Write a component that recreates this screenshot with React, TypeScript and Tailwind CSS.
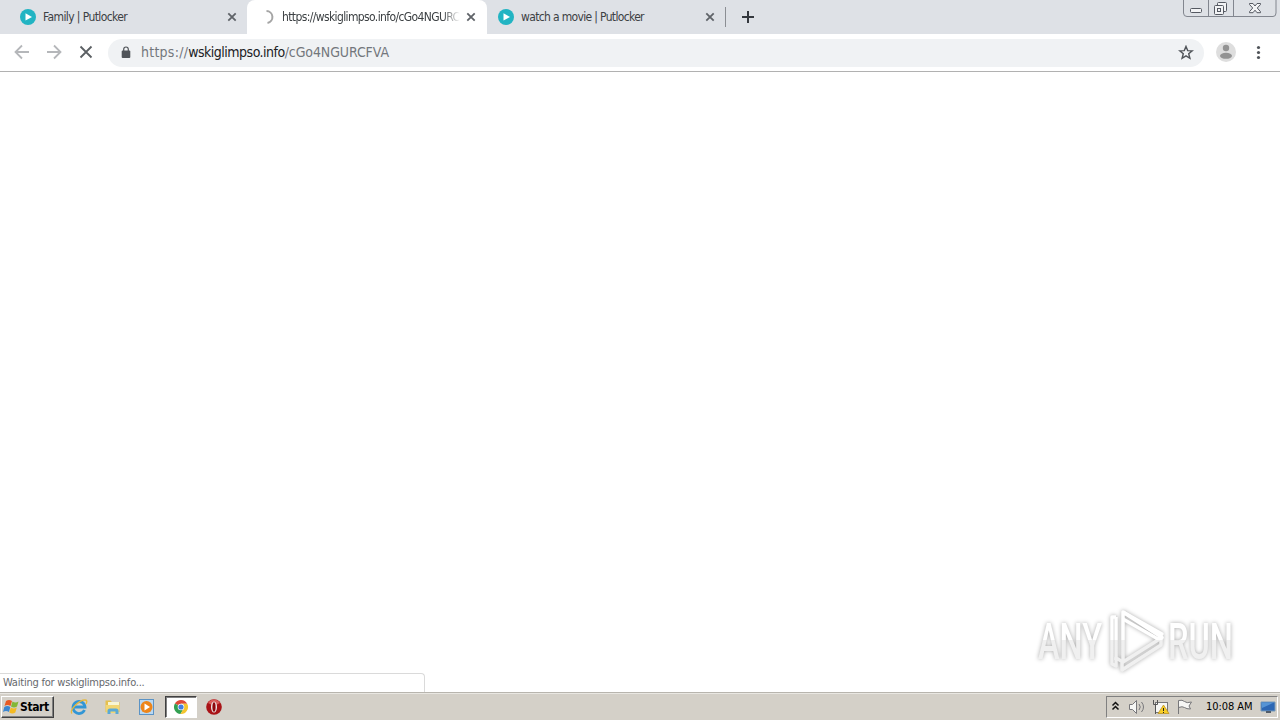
import type { ReactNode } from "react"

function PutlockerIcon() {
  return (
    <svg width="16" height="16" viewBox="0 0 16 16" className="shrink-0">
      <circle cx="8" cy="8" r="8" fill="#22b4c3" />
      <path d="M5.5 4.2v7.4L12 8z" fill="#fff" />
    </svg>
  )
}

function Spinner() {
  return (
    <svg width="16" height="16" viewBox="0 0 16 16" className="shrink-0">
      <path d="M7.5 2a6 6 0 0 1 1 11.9" fill="none" stroke="#a5a5a5" strokeWidth="2" />
    </svg>
  )
}

function CloseIcon() {
  return (
    <svg width="10" height="10" viewBox="0 0 10 10" className="shrink-0">
      <path d="M1.3 1.3l7.4 7.4M8.7 1.3L1.3 8.7" stroke="#5f6368" strokeWidth="1.8" />
    </svg>
  )
}

function Tab({ icon, children }: { icon: ReactNode; children: ReactNode }) {
  return (
    <>
      {icon}
      <div className="ml-[7px] w-[178px] shrink-0 overflow-hidden whitespace-nowrap">{children}</div>
      <div className="ml-[6px]">
        <CloseIcon />
      </div>
    </>
  )
}

function WindowButtons() {
  return (
    <svg width="94" height="18" viewBox="0 0 94 18" className="shrink-0">
      <path d="M.5 0v13q0 3.5 3.5 3.5h86q3 0 3-3.5V0M25.500 0v16.500M50.500 0v16.500" fill="none" stroke="#82868f" />
      <g fill="#f2f3f5" stroke="#555962">
        <rect x="7.500" y="8.500" width="11" height="4" rx="1" />
        <rect x="34.500" y="2.500" width="9" height="9" rx="1" />
        <rect x="31.500" y="5.500" width="9" height="9" rx="1" />
        <rect x="34.500" y="8.500" width="3" height="3" />
        <path d="M66.500 3.500h3.500l2 2.500 2-2.500h3.500v1L74.300 8l3.200 3.700v1H74l-2-2.500-2 2.500h-3.500v-1L69.700 8l-3.200-3.500z" />
      </g>
    </svg>
  )
}

function TabStrip() {
  return (
    <div className="flex h-[34px] shrink-0 bg-[#dee1e6] text-[12px] text-[#3c4043]">
      <div className="flex w-[247px] items-center rounded-br-lg pl-5">
        <Tab icon={<PutlockerIcon />}>
          <span className="tracking-[-0.6px]">Family | Putlocker</span>
        </Tab>
      </div>
      <div className="flex w-[240px] items-center rounded-t-lg bg-white pl-3">
        <Tab icon={<Spinner />}>
          <div className="mask-r-from-90% mask-r-to-100% tracking-[-0.62px]">https://wskiglimpso.info/cGo4NGURCFVA</div>
        </Tab>
      </div>
      <div className="flex w-[239px] items-center pl-[11px]">
        <Tab icon={<PutlockerIcon />}>
          <span className="tracking-[-0.66px]">watch a movie | Putlocker</span>
        </Tab>
        <div className="ml-[10px] h-5 w-px bg-[#8b8e93]" />
      </div>
      <div className="flex grow items-center pl-[16px]">
        <svg width="12" height="12" viewBox="0 0 12 12">
          <path d="M6 0v12M0 6h12" stroke="#34383e" strokeWidth="2" />
        </svg>
      </div>
      <div className="mr-[3px]">
        <WindowButtons />
      </div>
    </div>
  )
}

function Toolbar() {
  return (
    <div className="flex h-[38px] shrink-0 items-center border-b border-[#b1b1b1] bg-white">
      <svg width="108" height="37" viewBox="0 0 108 37" fill="none" strokeWidth="1.800">
        <path d="M29 18H16M22 11.500L15.500 18l6.500 6.500" stroke="#b5b7ba" />
        <path d="M47 18h13M54 11.500l6.500 6.500-6.500 6.500" stroke="#b5b7ba" />
        <path d="M80.500 12.500l11 11M91.500 12.500l-11 11" stroke="#5b5f63" />
      </svg>
      <div className="flex h-[28px] w-[1096px] items-center rounded-full bg-[#f0f2f4] pr-[10px] pl-[13px]">
        <svg width="10" height="14" viewBox="0 0 10 14">
          <rect x=".7" y="4.500" width="8.600" height="7.500" rx="1" fill="#505459" />
          <path d="M2.700 5V3.300a2.300 2.300 0 0 1 4.600 0V5" fill="none" stroke="#505459" strokeWidth="1.200" />
        </svg>
        <div className="ml-[10px] grow text-[14px] whitespace-nowrap text-[#73777c]">
          <span className="tracking-[0.25px]">https://</span>
          <span className="tracking-[-0.5px] text-[#202124]">wskiglimpso.info</span>
          <span className="tracking-[-0.1px]">/cGo4NGURCFVA</span>
        </div>
        <svg width="16" height="16" viewBox="0 0 16 16">
          <path d="M8 1.400l1.700 4.200 4.500.3-3.500 2.900 1.200 4.500L8 10.800l-3.900 2.500 1.200-4.500L1.800 5.900l4.500-.3z" fill="none" stroke="#505459" strokeWidth="1.400" />
        </svg>
      </div>
      <svg width="76" height="37" viewBox="0 0 76 37">
        <circle cx="22" cy="18" r="10" fill="#dedede" />
        <circle cx="22" cy="14" r="3.200" fill="#939393" />
        <ellipse cx="22" cy="21.800" rx="6" ry="3" fill="#939393" />
        <g fill="#505459">
          <circle cx="54.500" cy="13.500" r="1.600" />
          <circle cx="54.500" cy="18.500" r="1.600" />
          <circle cx="54.500" cy="23.500" r="1.600" />
        </g>
      </svg>
    </div>
  )
}

function AnyRunLogo() {
  return (
    <svg width="210" height="80" viewBox="0 0 210 80" className="overflow-visible drop-shadow-[0_0_2px_#aaa]">
      <defs>
        <linearGradient id="sheen" x1="0" y1="0" x2="0" y2="80" gradientUnits="userSpaceOnUse">
          <stop offset=".5" stopColor="#fff" />
          <stop offset=".5" stopColor="#f0f0f0" />
        </linearGradient>
      </defs>
      <g fill="url(#sheen)" fontFamily="Roboto, sans-serif" fontSize="50" fontWeight="500">
        <text x="8" y="59" textLength="64" lengthAdjust="spacingAndGlyphs">ANY</text>
        <text x="138" y="59" textLength="65" lengthAdjust="spacingAndGlyphs">RUN</text>
      </g>
      <g fill="none" stroke="url(#sheen)" strokeWidth="3.500" strokeLinejoin="round">
        <path d="M93 12v50l39-24.500z" />
        <path d="M93 12l39 22-4 5-35-20" />
        <path d="M86 17h-4v47l4 2v-8l7 4M92 62v8l39-25v-8" />
        <path d="M86 17v43" />
      </g>
    </svg>
  )
}

function WindowsFlag() {
  return (
    <svg width="17" height="16" viewBox="0 0 17 16" className="shrink-0">
      <path d="M3 2q3-2 6 0L7.500 7q-3-2-6 0z" fill="#e85a23" />
      <path d="M9.500 2.500q3 2 6 0L14 7.500q-3 2-6 0z" fill="#83b735" />
      <path d="M1.300 8q3-2 6 0L6 13q-3-2-6 0z" fill="#3b86d0" />
      <path d="M7.800 8.500q3 2 6 0l-1.500 5q-3 2-6 0z" fill="#f4ba22" />
    </svg>
  )
}

function QuickLaunch() {
  return (
    <>
      <svg width="18" height="18" viewBox="0 0 18 18" className="ml-[16px]">
        <path d="M14.500 12A6 6 0 1 1 15 9H4" fill="none" stroke="#3296d5" strokeWidth="2.800" />
        <path d="M2 15.500C-1 12 9 2 15 2q3 0 1 4" fill="none" stroke="#e6b83c" strokeWidth="1.300" />
      </svg>
      <svg width="18" height="18" viewBox="0 0 18 18" className="ml-[16px]">
        <path d="M1.500 4V2.500h5L8 4h7.500v10h-14z" fill="#e5c04e" />
        <path d="M4 4h11v4H4z" fill="#f8f5d3" />
        <path d="M1.500 7h14l-1 8h-12z" fill="#f2d673" />
        <path d="M3.500 16v-3q0-2.500 2.500-2.500h6q2.500 0 2.500 2.500v3h-3v-2.500h-5V16z" fill="#5ba9d6" />
      </svg>
      <svg width="18" height="18" viewBox="0 0 18 18" className="ml-[16px]">
        <rect x="1.500" y="1.500" width="14" height="15" fill="#b9d8f2" stroke="#5b93c5" />
        <circle cx="8.500" cy="9" r="6" fill="#ed8519" />
        <path d="M6.500 5.500v7L12 9z" fill="#fff" />
      </svg>
      <div className="ml-[9px] flex h-[22px] w-[32px] items-center justify-center border border-t-[#404040] border-r-white border-b-white border-l-[#404040] bg-white shadow-[inset_1px_1px_0_#808080]">
        <svg width="16" height="16" viewBox="0 0 16 16">
          <path d="M8 8L1.900 4.500A7 7 0 0 1 14.200 4.700H8z" fill="#df4937" />
          <path d="M8 8L1.900 4.500A7 7 0 0 0 7.500 15l3.200-5.500z" fill="#33a052" />
          <path d="M14.200 4.700H8L10.700 9.500 7.500 15A7 7 0 0 0 14.200 4.700" fill="#f4c52e" />
          <circle cx="8" cy="8" r="3.300" fill="#fff" />
          <circle cx="8" cy="8" r="2.600" fill="#437ee0" />
        </svg>
      </div>
      <svg width="18" height="18" viewBox="0 0 18 18" className="ml-[8px]">
        <circle cx="9" cy="9" r="7.800" fill="#a91317" />
        <path d="M3 5a7 7 0 0 1 12 0Q9 9 3 5" fill="#d95b59" />
        <ellipse cx="9" cy="9" rx="3" ry="5.500" fill="#eee" />
        <ellipse cx="9" cy="9" rx="1.600" ry="4.700" fill="#8e070b" />
      </svg>
    </>
  )
}

function Tray() {
  return (
    <div className="mr-[2px] ml-auto flex h-[22px] w-[172px] items-center border border-t-[#808080] border-r-white border-b-white border-l-[#808080]">
      <svg width="92" height="20" viewBox="0 0 92 20" className="shrink-0">
        <path d="M5.500 8.500l3-3 3 3M5.500 12.500l3-3 3 3" fill="none" stroke="#111" strokeWidth="1.500" />
        <g fill="#f6f6f4" stroke="#77777a">
          <path d="M22.500 7.500h3l4-4v13l-4-4h-3z" />
          <path d="M32 7q2.500 3 0 6M34.500 5q4 5 0 10" fill="none" />
          <rect x="48.500" y="5.500" width="12" height="10" />
          <path d="M46.500 3v4.500h4V3M48.500 7.500V17" fill="none" stroke="#555" />
          <path d="M71.500 17V3.500q4-1 6 1t7 .5l-2.500 4 1.500 3q-4 0-6-1.500t-6 0" />
        </g>
        <path d="M56.500 8l5.500 8.500H51z" fill="#f7ce27" stroke="#b88914" strokeWidth=".7" />
        <path d="M56.500 11v3M56.500 15v1" stroke="#222" />
      </svg>
      <span className="ml-[7px] w-[48px] shrink-0 pt-[2px] text-[11px] tracking-[-0.05px] whitespace-nowrap text-black">10:08 AM</span>
      <svg width="17" height="16" viewBox="0 0 17 16" className="ml-[6px] shrink-0">
        <path d="M1 3h14v9H1z" fill="#2c67b4" stroke="#7799b7" />
        <path d="M1.500 3.500H14L2 9z" fill="#5594d5" />
        <path d="M6 12h5v2H6z" fill="#525d6a" />
      </svg>
    </div>
  )
}

function Taskbar() {
  return (
    <div className="flex h-[28px] shrink-0 items-center border-t border-[#b8b5ae] bg-[#d4d0c8] shadow-[inset_0_1px_0_#e9e7e2]">
      <div className="ml-px flex h-[22px] w-[53px] items-center border border-t-white border-r-[#404040] border-b-[#404040] border-l-white pl-px shadow-[inset_-1px_-1px_0_#808080]">
        <WindowsFlag />
        <span className="text-[12px] font-bold tracking-[-0.4px] text-black">Start</span>
      </div>
      <QuickLaunch />
      <Tray />
    </div>
  )
}

export default function App() {
  return (
    <div className="flex h-[720px] w-[1280px] flex-col overflow-hidden bg-white font-['DejaVu_Sans_Condensed','DejaVu_Sans',sans-serif]">
      <TabStrip />
      <Toolbar />
      <div className="flex grow flex-col justify-end">
        <div className="flex items-end justify-between">
          <div className="flex h-[19px] w-[425px] items-center rounded-tr border-t border-r border-[#dadada] pt-px pl-[3px] text-[11px] tracking-[-0.22px] text-[#66696d]">
            Waiting for wskiglimpso.info...
          </div>
          <div className="mr-[40px] mb-[12px]">
            <AnyRunLogo />
          </div>
        </div>
      </div>
      <Taskbar />
    </div>
  )
}
